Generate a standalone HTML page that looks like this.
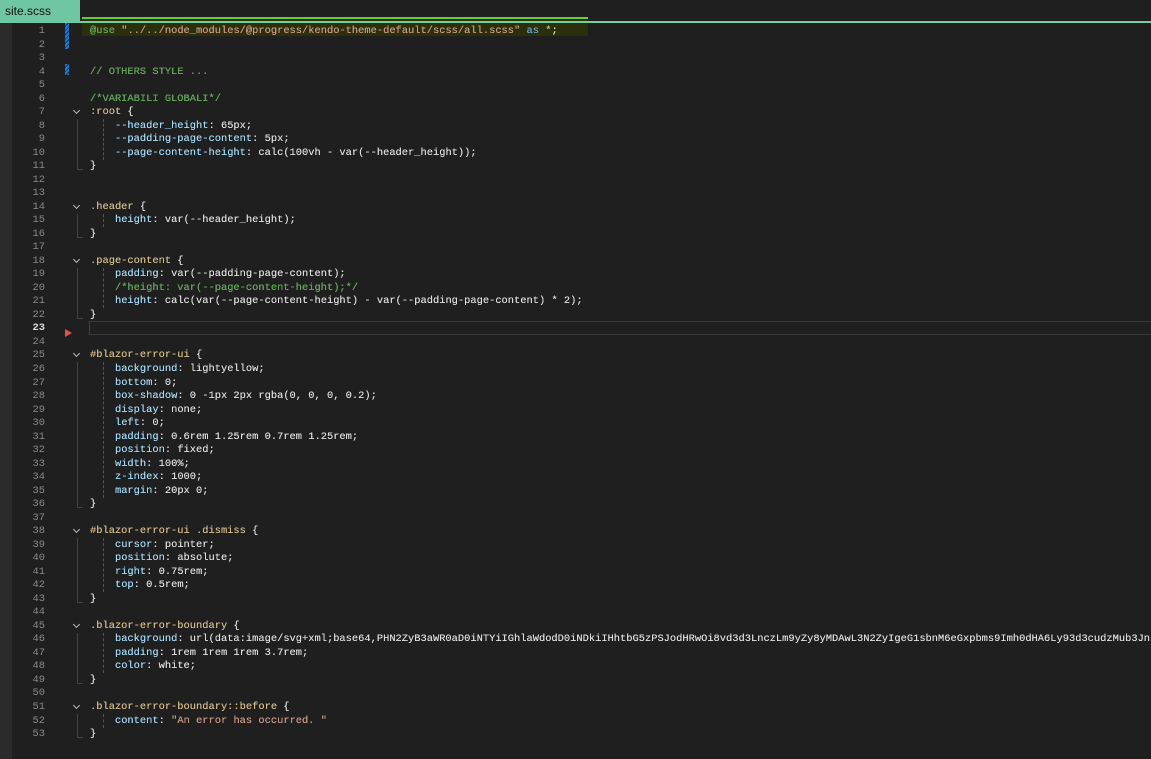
<!DOCTYPE html>
<html><head><style>
html,body{overflow:hidden}
body{margin:0;width:1151px;height:759px;background:#1f1f1f;position:relative;font-family:"Liberation Mono",monospace;}
.strip{position:absolute;left:0;top:22px;width:12px;height:737px;background:#2b2b2b}
.tab{position:absolute;left:0;top:0;width:80px;height:23px;background:#6fc6a2;color:#111;font:12px "Liberation Sans",sans-serif;line-height:23px;padding-left:5px;box-sizing:border-box}
.topline{position:absolute;left:80px;top:21px;width:1071px;height:2px;background:#6fcf9f}
.hl{position:absolute;left:82px;top:17px;width:506px;height:19px;background:#2c2f0c}
.ln{position:absolute;left:12px;width:33px;text-align:right;color:#8a8a8a;font-size:10.4px;line-height:14px}
.code{position:absolute;left:90px;width:1061px;overflow:hidden;white-space:pre;font-size:10.4px;line-height:14px;color:#e0e0e0;text-shadow:0 0 0.3px #e0e0e0}
.s{color:#d7ba7d}.p{color:#9cdcfe}.c{color:#57a64a}.q{color:#ce9178}.k{color:#569cd6}
.chev{position:absolute;left:74px;width:4px;height:4px;border-right:1px solid #bbb;border-bottom:1px solid #bbb;transform:rotate(45deg)}
.guide{position:absolute;left:103px;width:0;border-left:1px dashed #555}
.bguide{position:absolute;left:77px;width:5px;border-left:1px solid #444;border-bottom:1px solid #444}
.mark{position:absolute;left:65px;width:4px;background:repeating-linear-gradient(135deg,#1c7ad6 0 2px,#0b3a6a 2px 3px)}
.cur{position:absolute;left:89px;top:321px;width:1062px;height:12px;border:1px solid #3a3a3a;border-left:1px solid #444}
.bp{position:absolute;left:65px;top:329px;width:0;height:0;border-left:7px solid #e05252;border-top:4px solid transparent;border-bottom:4px solid transparent}
</style></head><body>
<div class="strip"></div>
<div class="hl"></div>
<div class="topline"></div>
<div style="position:absolute;left:82px;width:506px;top:17px;height:2px;background:#6c3"></div>
<div class="tab">site.scss</div>
<div class="mark" style="top:23px;height:26px"></div>
<div class="mark" style="top:64px;height:11px"></div>
<div class="cur"></div>
<div class="bp"></div>
<div id="g"></div>
<script>
var L=[
'<span class="c">@use</span> <span class="q">"../../node_modules/@progress/kendo-theme-default/scss/all.scss"</span> <span class="k">as</span> <span class="s">*</span>;',
'','',
'<span class="c">// OTHERS STYLE ...</span>','',
'<span class="c">/*VARIABILI GLOBALI*/</span>',
'<span class="s">:root</span> {',
'    <span class="p">--header_height</span>: 65px;',
'    <span class="p">--padding-page-content</span>: 5px;',
'    <span class="p">--page-content-height</span>: calc(100vh - var(--header_height));',
'}','','',
'<span class="s">.header</span> {',
'    <span class="p">height</span>: var(--header_height);',
'}','',
'<span class="s">.page-content</span> {',
'    <span class="p">padding</span>: var(--padding-page-content);',
'    <span class="c">/*height: var(--page-content-height);*/</span>',
'    <span class="p">height</span>: calc(var(--page-content-height) - var(--padding-page-content) * 2);',
'}','','',
'<span class="s">#blazor-error-ui</span> {',
'    <span class="p">background</span>: lightyellow;',
'    <span class="p">bottom</span>: 0;',
'    <span class="p">box-shadow</span>: 0 -1px 2px rgba(0, 0, 0, 0.2);',
'    <span class="p">display</span>: none;',
'    <span class="p">left</span>: 0;',
'    <span class="p">padding</span>: 0.6rem 1.25rem 0.7rem 1.25rem;',
'    <span class="p">position</span>: fixed;',
'    <span class="p">width</span>: 100%;',
'    <span class="p">z-index</span>: 1000;',
'    <span class="p">margin</span>: 20px 0;',
'}','',
'<span class="s">#blazor-error-ui .dismiss</span> {',
'    <span class="p">cursor</span>: pointer;',
'    <span class="p">position</span>: absolute;',
'    <span class="p">right</span>: 0.75rem;',
'    <span class="p">top</span>: 0.5rem;',
'}','',
'<span class="s">.blazor-error-boundary</span> {',
'    <span class="p">background</span>: url(data:image/svg+xml;base64,PHN2ZyB3aWR0aD0iNTYiIGhlaWdodD0iNDkiIHhtbG5zPSJodHRwOi8vd3d3LnczLm9yZy8yMDAwL3N2ZyIgeG1sbnM6eGxpbms9Imh0dHA6Ly93d3cudzMub3JnLzE5OTkveGxpbmsi',
'    <span class="p">padding</span>: 1rem 1rem 1rem 3.7rem;',
'    <span class="p">color</span>: white;',
'}','',
'<span class="s">.blazor-error-boundary::before</span> {',
'    <span class="p">content</span>: <span class="q">"An error has occurred. "</span>',
'}'];
var h='',step=13.52;
for(var i=0;i<L.length;i++){var t=30+i*step-6;
h+='<div class="ln" style="top:'+t+'px;'+(i==22?'color:#ddd;font-weight:bold':'')+'">'+(i+1)+'</div>';
h+='<div class="code" style="top:'+t+'px">'+L[i]+'</div>';}
[[7,11],[14,16],[18,22],[25,36],[38,43],[45,49],[51,53]].forEach(function(b){
var a=b[0],e=b[1];h+='<div class="chev" style="top:'+(30+(a-1)*step-3)+'px"></div>';
h+='<div class="bguide" style="top:'+(30+(a-1)*step+8)+'px;height:'+((e-a)*step-4)+'px"></div>';
h+='<div class="guide" style="top:'+(30+(a-1)*step+8)+'px;height:'+((e-a-1)*step)+'px"></div>';});
document.getElementById('g').innerHTML=h;
</script>
</body></html>
